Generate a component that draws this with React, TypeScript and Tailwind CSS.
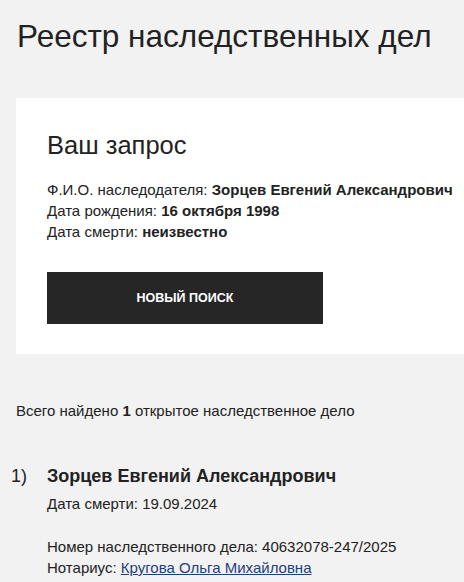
export default function App() {
  return (
    <div className="min-h-[582px] bg-[#f2f2f2] font-['Liberation_Sans',Arial,sans-serif] text-[#222]">
      <h1 className="px-[17px] pt-[17px] text-[31.5px] leading-[38px] font-normal">
        Реестр наследственных дел
      </h1>

      <section className="mt-[43px] ml-[16px] bg-white pl-[31px] pt-[32px] pb-[30px]">
        <h2 className="text-[25.5px] leading-[30px]">Ваш запрос</h2>
        <div className="mt-[19px] text-[15px] leading-[21px]">
          <p>
            Ф.И.О. наследодателя: <b>Зорцев Евгений Александрович</b>
          </p>
          <p>
            Дата рождения: <b>16 октября 1998</b>
          </p>
          <p>
            Дата смерти: <b>неизвестно</b>
          </p>
        </div>
        <button className="mt-[30px] flex h-[52px] w-[276px] items-center justify-center bg-[#262626] text-[12.5px] font-bold text-white">
          НОВЫЙ ПОИСК
        </button>
      </section>

      <p className="mt-[47px] px-[16px] text-[15px] leading-[20px]">
        Всего найдено <b>1</b> открытое наследственное дело
      </p>

      <div className="mt-[43px] flex">
        <span className="w-[47px] pl-[11px] text-[18px] leading-[24px]">1)</span>
        <div>
          <h3 className="text-[18px] leading-[24px] font-bold">Зорцев Евгений Александрович</h3>
          <p className="mt-[5px] text-[15px] leading-[21px]">Дата смерти: 19.09.2024</p>
          <div className="mt-[22px] text-[15px] leading-[21px]">
            <p>Номер наследственного дела: 40632078-247/2025</p>
            <p>
              Нотариус:{" "}
              <a href="#" className="text-[#1f3f7a] underline">
                Кругова Ольга Михайловна
              </a>
            </p>
          </div>
        </div>
      </div>
    </div>
  );
}
